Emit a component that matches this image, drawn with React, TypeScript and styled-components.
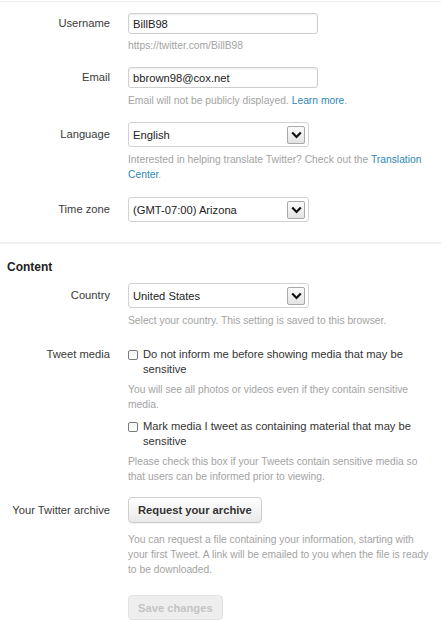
import React from "react";
import styled, { createGlobalStyle } from "styled-components";

const Global = createGlobalStyle`
  html, body { margin: 0; padding: 0; background: #fff; }
  body { font-family: "Liberation Sans", Arial, sans-serif; font-size: 11.2px; color: #333; }
  * { box-sizing: border-box; }
`;

const Page = styled.div`
  width: 441px;
  min-height: 621px;
  background: #fff;
  overflow: hidden;
`;

const TopRule = styled.div`
  height: 1px;
  margin-top: 1px;
  background: #ececec;
`;

const Divider = styled.div`
  height: 2px;
  margin-top: 20px;
  background: #f0f0f0;
`;

const Heading = styled.h2`
  margin: 15px 0 0 0;
  padding-left: 7px;
  font-size: 12px;
  line-height: 16px;
  font-weight: bold;
  color: #222;
`;

const Row = styled.div<{ $mt: number }>`
  display: flex;
  align-items: flex-start;
  margin-top: ${(p) => p.$mt}px;
`;

const Label = styled.div<{ $lh: number }>`
  flex: 0 0 110px;
  margin-right: 18px;
  text-align: right;
  color: #3a3a3a;
  font-size: 11.2px;
  line-height: ${(p) => p.$lh}px;
  white-space: nowrap;
`;

const Field = styled.div`
  flex: 0 0 305px;
  display: flex;
  flex-direction: column;
  align-items: flex-start;
`;

const TextInput = styled.input`
  width: 190px;
  height: 21px;
  padding: 0 4px;
  border: 1px solid #cfcfcf;
  border-radius: 3px;
  box-shadow: inset 0 1px 2px rgba(0, 0, 0, 0.08);
  font-family: "Liberation Sans", Arial, sans-serif;
  font-size: 11.2px;
  color: #222;
  background: #fff;
  outline: none;
`;

const Select = styled.div`
  width: 181px;
  height: 25px;
  display: flex;
  align-items: center;
  justify-content: space-between;
  padding-left: 4px;
  padding-right: 3px;
  border: 1px solid #d2d2d2;
  border-radius: 3px;
  background: #fff;
  font-size: 11.2px;
  color: #222;
`;

const ArrowBox = styled.span`
  width: 18px;
  height: 18px;
  display: flex;
  align-items: center;
  justify-content: center;
  border: 1px solid #a9a9a9;
  border-radius: 2px;
  background: linear-gradient(#fbfbfb, #e3e3e3);
`;

const Hint = styled.div<{ $mt: number }>`
  margin-top: ${(p) => p.$mt}px;
  font-size: 10.3px;
  line-height: 15px;
  color: #a3a3a3;
`;

const Link = styled.a`
  color: #2f87b5;
  text-decoration: none;
`;

const CheckLine = styled.label<{ $mt?: number }>`
  display: flex;
  align-items: flex-start;
  margin-top: ${(p) => p.$mt ?? 0}px;
  font-size: 11.2px;
  line-height: 15px;
  color: #333;
`;

const Box = styled.span`
  flex: 0 0 10px;
  width: 10px;
  height: 10px;
  margin-top: 3px;
  margin-right: 5px;
  border: 1px solid #7a7a7a;
  border-radius: 2px;
  background: linear-gradient(#f4f4f4, #fff);
`;

const Button = styled.button<{ $disabled?: boolean }>`
  height: ${(p) => (p.$disabled ? 25 : 26)}px;
  padding: 0 9px;
  border: 1px solid ${(p) => (p.$disabled ? "#e2e2e2" : "#cdcdcd")};
  border-radius: 4px;
  background: ${(p) =>
    p.$disabled ? "#eeeeee" : "linear-gradient(#ffffff, #e9e9e9)"};
  box-shadow: ${(p) => (p.$disabled ? "none" : "0 1px 0 rgba(0,0,0,0.05)")};
  font-family: "Liberation Sans", Arial, sans-serif;
  font-size: 11.2px;
  font-weight: bold;
  color: ${(p) => (p.$disabled ? "#c4c4c4" : "#333")};
  cursor: pointer;
`;

const SaveRow = styled.div`
  margin-top: 18px;
  padding-left: 128px;
`;

const Chevron = () => (
  <svg width="11" height="8" viewBox="0 0 11 8">
    <polyline
      points="1.2,1.5 5.5,6 9.8,1.5"
      fill="none"
      stroke="#111"
      strokeWidth="2.2"
      strokeLinejoin="miter"
    />
  </svg>
);

const Dropdown = ({ value }: { value: string }) => (
  <Select>
    <span>{value}</span>
    <ArrowBox>
      <Chevron />
    </ArrowBox>
  </Select>
);

export default function App() {
  return (
    <Page>
      <Global />
      <TopRule />

      <Row $mt={11}>
        <Label $lh={21}>Username</Label>
        <Field>
          <TextInput defaultValue="BillB98" />
          <Hint $mt={4}>https://twitter.com/BillB98</Hint>
        </Field>
      </Row>

      <Row $mt={14}>
        <Label $lh={21}>Email</Label>
        <Field>
          <TextInput defaultValue="bbrown98@cox.net" />
          <Hint $mt={5}>
            Email will not be publicly displayed. <Link href="#">Learn more</Link>.
          </Hint>
        </Field>
      </Row>

      <Row $mt={14}>
        <Label $lh={25}>Language</Label>
        <Field>
          <Dropdown value="English" />
          <Hint $mt={5}>
            Interested in helping translate Twitter? Check out the{" "}
            <Link href="#">Translation Center</Link>.
          </Hint>
        </Field>
      </Row>

      <Row $mt={15}>
        <Label $lh={25}>Time zone</Label>
        <Field>
          <Dropdown value="(GMT-07:00) Arizona" />
        </Field>
      </Row>

      <Divider />
      <Heading>Content</Heading>

      <Row $mt={8}>
        <Label $lh={25}>Country</Label>
        <Field>
          <Dropdown value="United States" />
          <Hint $mt={5}>Select your country. This setting is saved to this browser.</Hint>
        </Field>
      </Row>

      <Row $mt={19}>
        <Label $lh={15}>Tweet media</Label>
        <Field>
          <CheckLine>
            <Box />
            <span>Do not inform me before showing media that may be sensitive</span>
          </CheckLine>
          <Hint $mt={5}>
            You will see all photos or videos even if they contain sensitive media.
          </Hint>
          <CheckLine $mt={7}>
            <Box />
            <span>Mark media I tweet as containing material that may be sensitive</span>
          </CheckLine>
          <Hint $mt={5}>
            Please check this box if your Tweets contain sensitive media so that users can be
            informed prior to viewing.
          </Hint>
        </Field>
      </Row>

      <Row $mt={13}>
        <Label $lh={26}>Your Twitter archive</Label>
        <Field>
          <Button>Request your archive</Button>
          <Hint $mt={9}>
            You can request a file containing your information, starting with your first
            Tweet. A link will be emailed to you when the file is ready to be downloaded.
          </Hint>
        </Field>
      </Row>

      <SaveRow>
        <Button $disabled disabled>
          Save changes
        </Button>
      </SaveRow>
    </Page>
  );
}
